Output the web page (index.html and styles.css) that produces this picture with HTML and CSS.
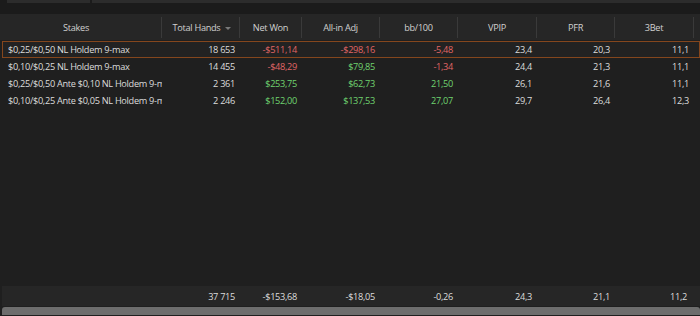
FILE: index.html
```html
<!DOCTYPE html>
<html>
<head>
<meta charset="utf-8">
<link rel="stylesheet" href="styles.css">
</head>
<body>
<div class="app">
  <div class="topstrip">
    <div class="tab tab-a"></div>
    <div class="tab tab-b"></div>
  </div>
  <div class="grid header">
    <div class="hcell stakes">Stakes</div>
    <div class="hcell sorted">Total Hands<span class="arrow"></span></div>
    <div class="hcell">Net Won</div>
    <div class="hcell">All-in Adj</div>
    <div class="hcell">bb/100</div>
    <div class="hcell">VPIP</div>
    <div class="hcell">PFR</div>
    <div class="hcell">3Bet</div>
  </div>
  <div class="rows">
    <div class="grid row selected">
      <div class="cell left">$0,25/$0,50 NL Holdem 9-max</div>
      <div class="cell">18 653</div>
      <div class="cell neg">-$511,14</div>
      <div class="cell neg">-$298,16</div>
      <div class="cell neg">-5,48</div>
      <div class="cell">23,4</div>
      <div class="cell">20,3</div>
      <div class="cell">11,1</div>
    </div>
    <div class="grid row">
      <div class="cell left">$0,10/$0,25 NL Holdem 9-max</div>
      <div class="cell">14 455</div>
      <div class="cell neg">-$48,29</div>
      <div class="cell pos">$79,85</div>
      <div class="cell neg">-1,34</div>
      <div class="cell">24,4</div>
      <div class="cell">21,3</div>
      <div class="cell">11,1</div>
    </div>
    <div class="grid row">
      <div class="cell left">$0,25/$0,50 Ante $0,10 NL Holdem 9-max</div>
      <div class="cell">2 361</div>
      <div class="cell pos">$253,75</div>
      <div class="cell pos">$62,73</div>
      <div class="cell pos">21,50</div>
      <div class="cell">26,1</div>
      <div class="cell">21,6</div>
      <div class="cell">11,1</div>
    </div>
    <div class="grid row">
      <div class="cell left">$0,10/$0,25 Ante $0,05 NL Holdem 9-max</div>
      <div class="cell">2 246</div>
      <div class="cell pos">$152,00</div>
      <div class="cell pos">$137,53</div>
      <div class="cell pos">27,07</div>
      <div class="cell">29,7</div>
      <div class="cell">26,4</div>
      <div class="cell">12,3</div>
    </div>
  </div>
  <div class="grid footer">
    <div class="cell left"></div>
    <div class="cell">37 715</div>
    <div class="cell">-$153,68</div>
    <div class="cell">-$18,05</div>
    <div class="cell">-0,26</div>
    <div class="cell">24,3</div>
    <div class="cell">21,1</div>
    <div class="cell">11,2</div>
  </div>
  <div class="scrollbar"><div class="thumb"></div></div>
</div>
</body>
</html>
```
FILE: styles.css
```css
html, body {
  margin: 0;
  padding: 0;
  background: #1f1f1f;
}
.app {
  width: 700px;
  height: 316px;
  display: flex;
  flex-direction: column;
  font-family: "Open Sans", "Noto Sans", sans-serif;
  font-size: 9.2px;
  letter-spacing: -0.3px;
  color: #dcdcdc;
  overflow: hidden;
}
.topstrip {
  height: 14px;
  flex: none;
  background: #1b1b1b;
  display: flex;
  gap: 2px;
  padding-left: 7px;
}
.tab {
  height: 3px;
  background: #2c2c2c;
}
.tab-a { width: 83px; }
.tab-b { flex: 1; }
.grid {
  display: grid;
  grid-template-columns: 162px 78px 62px 78px 78px 79px 78px 79px 6px;
}
.header {
  height: 26px;
  flex: none;
  background: #262626;
  align-items: center;
}
.hcell {
  height: 21px;
  border-right: 1px solid #3a3a3a;
  display: flex;
  align-items: center;
  justify-content: center;
  color: #d0d0d0;
  position: relative;
}
.stakes { padding-right: 9px; }
.sorted { padding-right: 8px; }
.arrow {
  position: absolute;
  right: 8px;
  top: 10px;
  width: 0;
  height: 0;
  border-left: 3px solid transparent;
  border-right: 3px solid transparent;
  border-top: 3px solid #7a7a7a;
}
.rows {
  flex: 1;
  padding-top: 1px;
  background: #1f1f1f;
}
.row {
  height: 17px;
  box-sizing: border-box;
  align-items: center;
}
.row.selected {
  border: 1px solid #84461d;
  margin-left: 2px;
  background: #222222;
  grid-template-columns: 159px 78px 62px 78px 78px 79px 78px 79px 6px;
}
.row.selected .cell.left { padding-left: 5px; }
.cell {
  text-align: right;
  padding-right: 5px;
  white-space: nowrap;
  overflow: hidden;
}
.cell.left {
  text-align: left;
  padding-left: 8px;
  padding-right: 0;
  text-overflow: clip;
}
.neg { color: #e06666; }
.pos { color: #6fd36f; }
.footer {
  height: 20px;
  flex: none;
  background: #262626;
  align-items: center;
  margin-left: 2px;
  grid-template-columns: 160px 78px 62px 78px 78px 79px 78px 79px 6px;
}
.footer .cell:last-child { padding-right: 7px; }
.scrollbar {
  height: 9px;
  flex: none;
  background: #1f1f1f;
  padding: 1px 0 0 2px;
}
.thumb {
  height: 8px;
  width: 698px;
  background: #6d6d6d;
  border-radius: 3px 3px 0 0;
}
```
